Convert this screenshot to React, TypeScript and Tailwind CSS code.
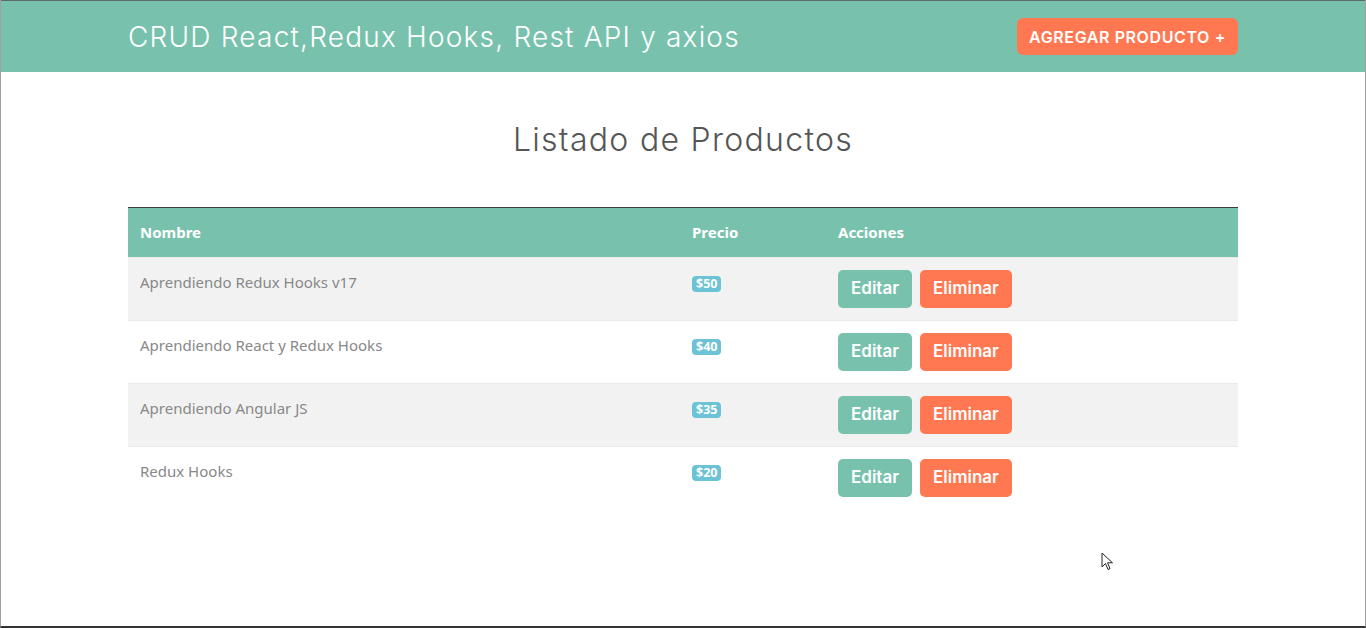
import { useState } from 'react'

interface Producto {
  id: number
  nombre: string
  precio: number
}

const productos: Producto[] = [
  { id: 1, nombre: 'Aprendiendo Redux Hooks v17', precio: 50 },
  { id: 2, nombre: 'Aprendiendo React y Redux Hooks', precio: 40 },
  { id: 3, nombre: 'Aprendiendo Angular JS', precio: 35 },
  { id: 4, nombre: 'Redux Hooks', precio: 20 },
]

const heading = "font-['Inter','Noto_Sans',sans-serif]"
const body = "font-['Noto_Sans','Open_Sans',sans-serif]"

function Header() {
  return (
    <header className="bg-[#78c2ad] h-[72px] border-t border-[#5f6b68]">
      <div className="w-[1110px] mx-auto h-full flex items-center justify-between">
        <h1 className={`${heading} text-white text-[28px] font-light tracking-[1.2px] leading-[36px]`}>
          CRUD React,Redux Hooks, Rest API y axios
        </h1>
        <button
          className={`${heading} bg-[#ff7851] text-white text-[16px] font-semibold uppercase px-[12px] h-[37px] rounded-[6px] tracking-[0.6px]`}
        >
          Agregar Producto +
        </button>
      </div>
    </header>
  )
}

function ProductoRow({ producto, striped }: { producto: Producto; striped: boolean }) {
  return (
    <tr className={`${striped ? 'bg-[#f2f2f2]' : 'bg-white'} border-t border-[#eaeaea] h-[63px]`}>
      <td className={`${body} text-[#888] text-[15px] px-3 pt-[12px] align-top leading-[24px]`}>
        {producto.nombre}
      </td>
      <td className="px-3 pt-[18px] align-top leading-[16px]">
        <span className={`${body} inline-block align-top bg-[#6cc3d5] text-white text-[12.5px] font-bold leading-[16px] px-[4px] rounded-[4px]`}>
          ${producto.precio}
        </span>
      </td>
      <td className="px-3 pt-[12px] align-top">
        <div className="flex gap-2">
          <button className={`${heading} bg-[#78c2ad] text-white text-[17px] font-semibold h-[38px] px-[13px] rounded-[5px]`}>
            Editar
          </button>
          <button className={`${heading} bg-[#ff7851] text-white text-[17px] font-semibold h-[38px] px-[13px] rounded-[5px]`}>
            Eliminar
          </button>
        </div>
      </td>
    </tr>
  )
}

export default function App() {
  const [lista] = useState(productos)

  return (
    <div className="relative h-[628px] bg-white border-x border-b-2 border-x-[#a0a0a0] border-b-[#333] overflow-hidden">
      <Header />
      <main className="w-[1110px] mx-auto">
        <h2 className={`${heading} text-center text-[#555] text-[32px] font-light tracking-[1.3px] mt-[48px] mb-[47px] leading-[40px]`}>
          Listado de Productos
        </h2>
        <table className="w-full border-collapse border-t border-[#3c3c3c]">
          <thead>
            <tr className="bg-[#78c2ad] h-[50px]">
              <th className={`${body} text-left text-white text-[15px] font-bold px-3 w-[552px]`}>Nombre</th>
              <th className={`${body} text-left text-white text-[15px] font-bold px-3 w-[146px]`}>Precio</th>
              <th className={`${body} text-left text-white text-[15px] font-bold px-3`}>Acciones</th>
            </tr>
          </thead>
          <tbody>
            {lista.map((p, i) => (
              <ProductoRow key={p.id} producto={p} striped={i % 2 === 0} />
            ))}
          </tbody>
        </table>
      </main>
      <svg
        className="absolute left-[1100px] top-[552px]"
        width="13"
        height="20"
        viewBox="0 0 13 20"
      >
        <path d="M1 1 L1 15 L4.5 11.5 L7 17.5 L9 16.6 L6.6 10.8 L11.5 10.8 Z" fill="white" stroke="#222" strokeWidth="1" />
      </svg>
    </div>
  )
}
